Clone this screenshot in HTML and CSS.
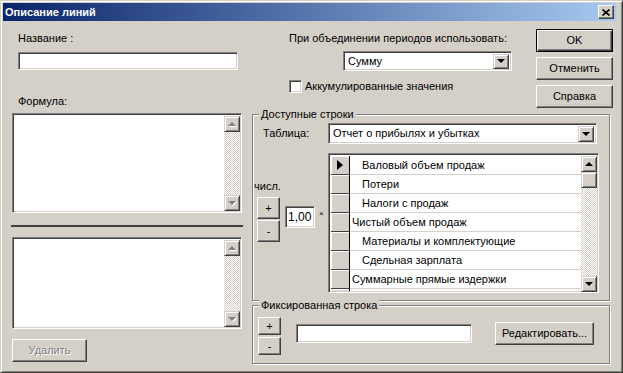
FILE: index.html
```html
<!DOCTYPE html>
<html>
	<head>
		<meta charset="utf-8">
		<title>Описание линий</title>
		<link rel="stylesheet" href="styles.css">
	</head>
	<body>
		<div class="window">
			<div class="titlebar">
				<span class="title">Описание линий</span>
				<div class="close">
					<svg width="8" height="7" viewBox="0 0 8 7"><path d="M0.5 0.5L7.5 6.5M7.5 0.5L0.5 6.5" stroke="#000" stroke-width="1.6"/></svg>
				</div>
			</div>
			<div class="client">
				<div class="left">
					<div class="lbl name-lbl">Название :</div>
					<div class="edit name-edit"></div>
					<div class="lbl formula-lbl">Формула:</div>
					<div class="memo memo1">
						<div class="vscroll">
							<div class="sbtn"><span class="arr up off"></span></div>
							<div class="track"></div>
							<div class="sbtn"><span class="arr down off"></span></div>
						</div>
					</div>
					<div class="splitter"></div>
					<div class="memo memo2">
						<div class="vscroll">
							<div class="sbtn"><span class="arr up off"></span></div>
							<div class="track"></div>
							<div class="sbtn"><span class="arr down off"></span></div>
						</div>
					</div>
					<div class="btn disabled del-btn">Удалить</div>
				</div>

				<div class="right">
					<div class="right-top">
						<div class="merge">
							<div class="lbl">При объединении периодов использовать:</div>
							<div class="combo merge-combo">
								<span class="combo-text">Сумму</span>
								<span class="dropbtn"><span class="arr down"></span></span>
							</div>
							<div class="check">
								<span class="checkbox"></span>
								<span>Аккумулированные значения</span>
							</div>
						</div>
						<div class="buttons">
							<div class="btn default">OK</div>
							<div class="btn">Отменить</div>
							<div class="btn">Справка</div>
						</div>
					</div>

					<div class="group rows-group">
						<span class="legend">Доступные строки</span>
						<div class="table-row">
							<span class="table-lbl">Таблица:</span>
							<div class="combo table-combo">
								<span class="combo-text">Отчет о прибылях и убытках</span>
								<span class="dropbtn"><span class="arr down"></span></span>
							</div>
						</div>
						<div class="grid-row">
							<div class="factor">
								<div class="lbl num-lbl">числ.</div>
								<div class="factor-row">
									<div class="pm">
										<div class="btn small">+</div>
										<div class="btn small">-</div>
									</div>
									<div class="edit factor-edit">1,00</div>
									<span class="times">×</span>
								</div>
							</div>
							<div class="grid">
								<div class="grid-rows">
									<div class="grow"><span class="ind"><span class="pointer"></span></span><span class="cell sub">Валовый объем продаж</span></div>
									<div class="grow"><span class="ind"></span><span class="cell sub">Потери</span></div>
									<div class="grow"><span class="ind"></span><span class="cell sub">Налоги с продаж</span></div>
									<div class="grow"><span class="ind"></span><span class="cell">Чистый объем продаж</span></div>
									<div class="grow"><span class="ind"></span><span class="cell sub">Материалы и комплектующие</span></div>
									<div class="grow"><span class="ind"></span><span class="cell sub">Сдельная зарплата</span></div>
									<div class="grow"><span class="ind"></span><span class="cell">Суммарные прямые издержки</span></div>
									<div class="grow"><span class="ind"></span><span class="cell"></span></div>
								</div>
								<div class="vscroll">
									<div class="sbtn"><span class="arr up"></span></div>
									<div class="sbtn thumb"></div>
									<div class="track"></div>
									<div class="sbtn"><span class="arr down"></span></div>
								</div>
							</div>
						</div>
					</div>

					<div class="group fixed-group">
						<span class="legend">Фиксированная строка</span>
						<div class="fixed-row">
							<div class="pm">
								<div class="btn tiny">+</div>
								<div class="btn tiny">-</div>
							</div>
							<div class="edit fixed-edit"></div>
							<div class="btn edit-btn">Редактировать...</div>
						</div>
					</div>
				</div>
			</div>
		</div>
	</body>
</html>
```

FILE: styles.css
```css
*{
	box-sizing: border-box;
}
body{
	margin: 0;
	background: #d4d0c8;
	font-family: "Liberation Sans", Arial, sans-serif;
	font-size: 11px;
	line-height: 13px;
	color: #000;
}
.window{
	width: 623px;
	height: 373px;
	background: #d4d0c8;
	border: 1px solid;
	border-color: #d4d0c8 #404040 #404040 #d4d0c8;
	box-shadow: inset 1px 1px #fff, inset -1px -1px #808080;
	padding: 2px 6px 2px 2px;
	display: flex;
	flex-direction: column;
}
.titlebar{
	height: 18px;
	background: linear-gradient(90deg, #0a246a, #a6caf0);
	display: flex;
	align-items: center;
	justify-content: space-between;
	padding: 0 2px 0 2px;
	color: #fff;
	font-weight: bold;
}
.close{
	width: 16px;
	height: 14px;
	background: #d4d0c8;
	border: 1px solid;
	border-color: #fff #404040 #404040 #fff;
	box-shadow: inset -1px -1px #808080;
	display: flex;
	align-items: center;
	justify-content: center;
}
.client{
	flex: 1;
	display: flex;
	margin-top: 1px;
}

/* bevels */
.btn{
	background: #d4d0c8;
	border: 1px solid;
	border-color: #fff #404040 #404040 #fff;
	box-shadow: inset -1px -1px #808080;
	display: flex;
	align-items: center;
	justify-content: center;
	white-space: nowrap;
}
.btn.default{
	border-color: #000;
	box-shadow: inset 1px 1px #fff, inset -1px -1px #404040, inset -2px -2px #808080;
}
.btn.disabled{
	color: #808080;
	text-shadow: 1px 1px #fff;
}
.edit, .memo, .combo, .checkbox{
	background: #fff;
	border: 1px solid;
	border-color: #808080 #fff #fff #808080;
	box-shadow: inset 1px 1px #404040, inset -1px -1px #d4d0c8;
}

/* arrows */
.arr{
	display: block;
	width: 0;
	height: 0;
	border-left: 4px solid transparent;
	border-right: 4px solid transparent;
}
.arr.up{
	border-bottom: 4px solid #000;
}
.arr.down{
	border-top: 4px solid #000;
}
.arr.up.off{
	border-bottom-color: #808080;
	filter: drop-shadow(1px 1px 0 #fff);
}
.arr.down.off{
	border-top-color: #808080;
	filter: drop-shadow(1px 1px 0 #fff);
}

.vscroll{
	width: 16px;
	display: flex;
	flex-direction: column;
}
.sbtn{
	height: 16px;
	flex: none;
	background: #d4d0c8;
	border: 1px solid;
	border-color: #d4d0c8 #404040 #404040 #d4d0c8;
	box-shadow: inset 1px 1px #fff, inset -1px -1px #808080;
	display: flex;
	align-items: center;
	justify-content: center;
}
.track{
	flex: 1;
	background: repeating-conic-gradient(#fff 0 25%, #d4d0c8 0 50%) 0 0 / 2px 2px;
}

/* left column */
.left{
	width: 247px;
	padding-left: 9px;
	display: flex;
	flex-direction: column;
}
.name-lbl{
	margin: 10px 0 0 6px;
}
.name-edit{
	margin: 7px 0 0 6px;
	width: 220px;
	height: 18px;
}
.formula-lbl{
	margin: 25px 0 0 6px;
}
.memo{
	width: 230px;
	display: flex;
	justify-content: flex-end;
	padding: 2px 1px 1px 2px;
}
.memo1{
	margin-top: 5px;
	height: 100px;
}
.splitter{
	margin: 12px 0 0 -1px;
	width: 232px;
	height: 2px;
	background: #404040;
}
.memo2{
	margin-top: 10px;
	height: 92px;
}
.del-btn{
	margin-top: 10px;
	width: 75px;
	height: 23px;
}

/* right column */
.right{
	flex: 1;
	display: flex;
	flex-direction: column;
}
.right-top{
	height: 92px;
	display: flex;
}
.merge{
	margin-left: 39px;
	width: 247px;
	padding-top: 10px;
}
.combo{
	display: flex;
	align-items: center;
	justify-content: space-between;
	padding: 2px;
}
.combo-text{
	padding-left: 2px;
}
.dropbtn{
	width: 16px;
	height: 16px;
	background: #d4d0c8;
	border: 1px solid;
	border-color: #d4d0c8 #404040 #404040 #d4d0c8;
	box-shadow: inset 1px 1px #fff, inset -1px -1px #808080;
	display: flex;
	align-items: center;
	justify-content: center;
}
.merge-combo{
	margin: 6px 0 0 54px;
	width: 169px;
	height: 20px;
}
.merge-combo .dropbtn{
	height: 15px;
}
.check{
	margin-top: 9px;
	display: flex;
	align-items: center;
	gap: 3px;
}
.checkbox{
	width: 13px;
	height: 13px;
}
.buttons{
	margin-top: 7px;
	display: flex;
	flex-direction: column;
	gap: 5px;
}
.buttons .btn{
	width: 77px;
	height: 23px;
}

/* group boxes */
.group{
	position: relative;
	margin-left: 2px;
	width: 358px;
	border: 1px solid #808080;
	box-shadow: inset 1px 1px #fff, 1px 1px #fff;
}
.legend{
	position: absolute;
	top: -7px;
	left: 6px;
	padding: 0 2px;
	background: #d4d0c8;
}
.rows-group{
	height: 187px;
	padding-top: 8px;
}
.table-row{
	display: flex;
	align-items: center;
	padding-left: 10px;
}
.table-lbl{
	width: 65px;
}
.table-combo{
	width: 269px;
	height: 21px;
}
.grid-row{
	margin-top: 9px;
	display: flex;
}
.factor{
	width: 75px;
	padding-left: 1px;
}
.num-lbl{
	margin-top: 27px;
}
.factor-row{
	margin: 4px 0 0 3px;
	display: flex;
	align-items: flex-start;
}
.pm{
	display: flex;
	flex-direction: column;
	gap: 1px;
}
.btn.small{
	width: 23px;
	height: 22px;
}
.factor-edit{
	margin: 9px 0 0 5px;
	width: 30px;
	height: 22px;
	padding: 4px 0 0 2px;
	font-size: 12px;
}
.times{
	margin: 13px 0 0 4px;
	font-size: 8px;
	line-height: 8px;
}
.grid{
	width: 271px;
	height: 140px;
	display: flex;
	background: #fff;
	border: 1px solid;
	border-color: #808080 #fff #fff #808080;
	box-shadow: inset 1px 1px #404040, inset -1px -1px #d4d0c8;
	padding: 2px 1px 1px 2px;
}
.grid-rows{
	flex: 1;
	overflow: hidden;
}
.grow{
	display: flex;
	height: 19px;
}
.ind{
	width: 19px;
	flex: none;
	background: #d4d0c8;
	border-right: 1px solid #000;
	border-bottom: 1px solid #404040;
	box-shadow: inset 1px 1px #fff;
	display: flex;
	align-items: center;
	justify-content: center;
}
.pointer{
	width: 0;
	height: 0;
	border-top: 5px solid transparent;
	border-bottom: 5px solid transparent;
	border-left: 6px solid #000;
}
.cell{
	flex: 1;
	border-bottom: 1px solid #d4d0c8;
	padding: 3px 0 0 2px;
	white-space: nowrap;
}
.cell.sub{
	padding-left: 12px;
}
.grid .vscroll{
	height: 136px;
}

.fixed-group{
	margin-top: 4px;
	height: 59px;
}
.fixed-row{
	display: flex;
	align-items: flex-start;
	padding: 11px 0 0 5px;
}
.pm .btn.tiny{
	width: 23px;
	height: 18px;
}
.fixed-row .pm{
	gap: 2px;
}
.fixed-edit{
	margin: 7px 0 0 15px;
	width: 176px;
	height: 19px;
}
.edit-btn{
	margin: 5px 0 0 23px;
	width: 99px;
	height: 23px;
}
```
